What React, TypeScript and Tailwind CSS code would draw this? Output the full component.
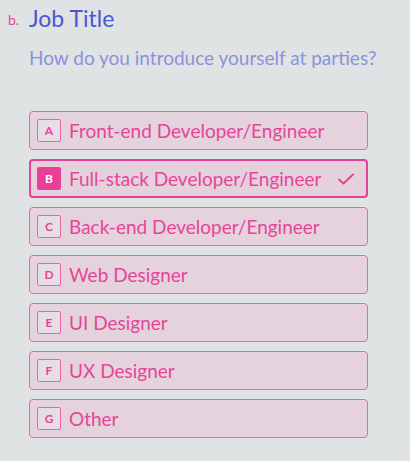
import React from "react";

const options = [
  { key: "A", label: "Front-end Developer/Engineer" },
  { key: "B", label: "Full-stack Developer/Engineer", selected: true },
  { key: "C", label: "Back-end Developer/Engineer" },
  { key: "D", label: "Web Designer" },
  { key: "E", label: "UI Designer" },
  { key: "F", label: "UX Designer" },
  { key: "G", label: "Other" },
];

export default function App() {
  return (
    <div
      className="w-[410px] h-[461px] bg-[#e0e3e4] overflow-hidden"
      style={{ fontFamily: 'Lato, "Noto Sans", sans-serif' }}
    >
      <div className="flex pt-[4px]">
        <div className="w-[29px] pl-[8px] pt-[8px] text-[14px] leading-[16px] text-[#e8449a]">b.</div>
        <div className="flex flex-col">
          <div className="text-[23px] leading-[28px] text-[#4a56d4]">Job Title</div>
          <div className="mt-[14px] text-[19px] leading-[24px] text-[#8a92df]">
            How do you introduce yourself at parties?
          </div>
          <div className="mt-[41px] flex flex-col gap-[9px] w-[339px]">
            {options.map((o) => (
              <div
                key={o.key}
                className={
                  o.selected
                    ? "h-[39px] flex items-center rounded-[4px] border-2 border-[#ea3f98] bg-[#e4d1dc] pl-[6px] pr-[12px]"
                    : "h-[39px] flex items-center rounded-[4px] border border-[#ee62a9] bg-[#e4d2dc] pl-[7px] pr-[13px]"
                }
              >
                <div
                  className={
                    o.selected
                      ? "w-[24px] h-[23px] flex items-center justify-center rounded-[2px] bg-[#ea3f98] text-white text-[12px] font-bold"
                      : "w-[24px] h-[23px] flex items-center justify-center rounded-[2px] border border-[#ee62a9] bg-[#e5dfe3] text-[#e8449a] text-[12px] font-bold"
                  }
                >
                  {o.key}
                </div>
                <div className="ml-[8px] flex-1 text-[19px] leading-[24px] text-[#e8449a]">{o.label}</div>
                {o.selected && (
                  <svg width="16" height="12" viewBox="0 0 16 12" fill="none">
                    <path d="M1 6.5 L5.5 10.5 L15 1.5" stroke="#e8449a" strokeWidth="2" strokeLinecap="round" strokeLinejoin="round" />
                  </svg>
                )}
              </div>
            ))}
          </div>
        </div>
      </div>
    </div>
  );
}
